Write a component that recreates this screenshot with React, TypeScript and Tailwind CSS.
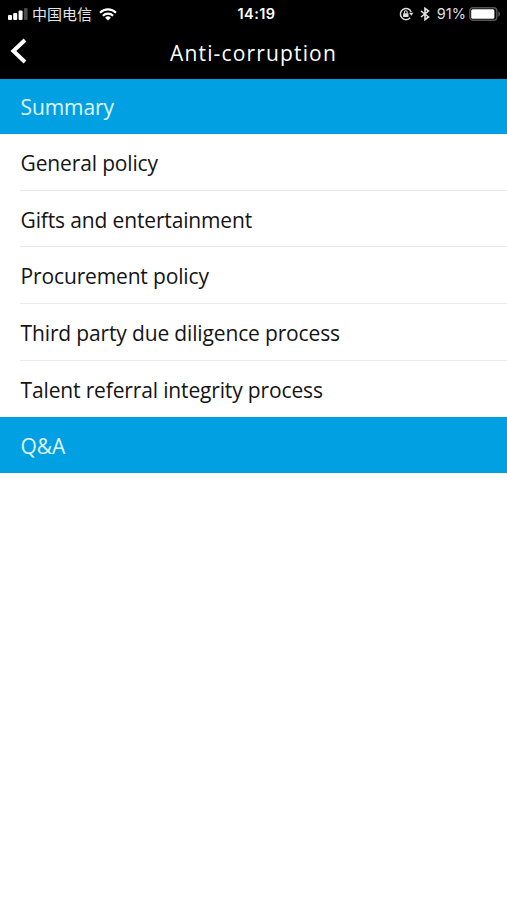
import clsx from 'clsx'

const topics = [
    { label: 'General policy', height: 'h-[57px]' },
    { label: 'Gifts and entertainment', height: 'h-[56px]' },
    { label: 'Procurement policy', height: 'h-[57px]' },
    { label: 'Third party due diligence process', height: 'h-[57px]' },
    { label: 'Talent referral integrity process', height: 'h-[56px]' },
]

const SignalIcon = () => (
    <svg width="20" height="12" viewBox="0 0 20 12" fill="white">
        <rect x="0" y="7" width="4" height="5" rx="1" />
        <rect x="5.2" y="5" width="4" height="7" rx="1" />
        <rect x="10.6" y="2.5" width="4" height="9.5" rx="1" />
        <rect x="16" y="0" width="3.6" height="12" rx="1" fill="#4a4a4a" />
    </svg>
)

const WifiIcon = () => (
    <svg width="18" height="13" viewBox="0 0 18 13" fill="none" stroke="white" strokeWidth="2.1">
        <path d="M1 4.7a11.4 11.4 0 0 1 16 0" />
        <path d="M3.9 7.7a7.3 7.3 0 0 1 10.2 0" />
        <path d="M9 12.6 6.1 9.7a4.1 4.1 0 0 1 5.8 0Z" fill="white" stroke="none" />
    </svg>
)

const RotationLockIcon = () => (
    <svg width="15" height="14" viewBox="0 0 15 14" fill="none" stroke="#dedede" strokeWidth="1.4">
        <path d="M12.2 5A5.6 5.6 0 1 0 11.2 10.8" />
        <path d="M10.1 5.8h4.4l-2.2 3Z" fill="#dedede" stroke="none" />
        <rect x="4.1" y="6.2" width="5.4" height="3.9" rx=".5" fill="#dedede" stroke="none" />
        <path d="M5.4 6.5V5.2a1.4 1.4 0 0 1 2.8 0v1.3" strokeWidth="1.1" />
    </svg>
)

const BluetoothIcon = () => (
    <svg width="10" height="14" viewBox="0 0 10 14" fill="none" stroke="#e4e4e4" strokeWidth="1.6">
        <path d="M1 4l7.5 6L5 12.7V1.3L8.5 4 1 10" />
    </svg>
)

const BatteryIcon = () => (
    <svg width="32" height="14" viewBox="0 0 32 14">
        <rect x=".8" y=".8" width="27" height="12.4" rx="3" fill="none" stroke="#555" strokeWidth="1.4" />
        <rect x="2.2" y="2.3" width="23.2" height="9.4" rx="1.5" fill="white" />
        <path d="M29.4 4.5c2 .6 2 4.4 0 5Z" fill="#666" />
    </svg>
)

const SectionHeader = ({ title, className }: { title: string; className: string }) => (
    <h2 className={clsx('flex items-center bg-[#00a0e2] pl-[20.6px] text-[21px] tracking-[-0.12px] text-[#e0f7ff]', className)}>
        {title}
    </h2>
)

const App = () => {
    return (
        <div className="h-[900px] w-full overflow-hidden bg-white font-['Open_Sans',sans-serif]">
            <header className="h-[79px] bg-black text-white">
                <div className="grid h-7 grid-cols-[1fr_auto_1fr] items-center pl-2 pr-[6px] font-['Inter',sans-serif]">
                    <div className="flex items-center">
                        <SignalIcon />
                        <span className="ml-1 pb-[2px] font-['Noto_Sans_CJK_SC',sans-serif] text-[15px] leading-none text-[#e4e4e4]">中国电信</span>
                        <span className="ml-[7px]"><WifiIcon /></span>
                    </div>
                    <span className="pl-1 text-[14.5px] font-semibold leading-none tracking-[0.4px]">14:19</span>
                    <div className="flex items-center justify-end">
                        <RotationLockIcon />
                        <span className="ml-1.5"><BluetoothIcon /></span>
                        <span className="ml-[7px] mr-[3px] text-[14.5px] leading-none text-[#dedede]">91%</span>
                        <BatteryIcon />
                    </div>
                </div>
                <div className="grid h-[51px] grid-cols-[40px_1fr_40px] items-center">
                    <button aria-label="Back" className="pb-1.5 pl-2.5">
                        <svg width="18" height="26" viewBox="0 0 18 26" fill="none" stroke="white" strokeWidth="4">
                            <path d="M15 2 3.4 13 15 24" />
                        </svg>
                    </button>
                    <h1 className="text-center text-[21px] tracking-[1.15px]">Anti-corruption</h1>
                </div>
            </header>

            <SectionHeader title="Summary" className="h-[55px] pt-[2px]" />
            <ul className="ml-5">
                {topics.map((topic) => (
                    <li
                        key={topic.label}
                        className={clsx('flex items-center border-b border-[#e9e9e9] pl-[0.6px] pt-1 text-[21px] tracking-[-0.15px] text-[#141414] last:border-b-0', topic.height)}
                    >
                        {topic.label}
                    </li>
                ))}
            </ul>
            <SectionHeader title="Q&A" className="h-[56px] pt-[3px]" />
        </div>
    )
}

export default App
